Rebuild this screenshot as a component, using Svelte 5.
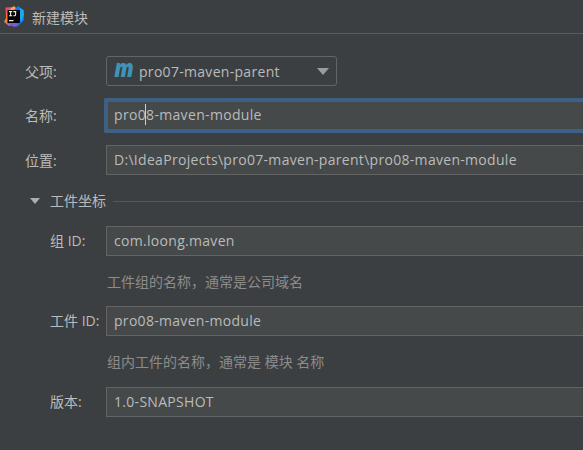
<script>
  let parent = 'pro07-maven-parent';
  let nameBefore = 'pro0';
  let nameAfter = '8-maven-module';
  let location = 'D:\\IdeaProjects\\pro07-maven-parent\\pro08-maven-module';
  let groupId = 'com.loong.maven';
  let artifactId = 'pro08-maven-module';
  let version = '1.0-SNAPSHOT';
</script>

<div class="dialog">
  <header class="titlebar">
    <svg class="logo" width="20" height="21" viewBox="0 0 20 21">
      <defs>
        <linearGradient id="warm" x1="0" y1="0" x2="0" y2="1">
          <stop offset="0" stop-color="#e8467d" />
          <stop offset=".4" stop-color="#f5653f" />
          <stop offset=".7" stop-color="#f98b28" />
          <stop offset="1" stop-color="#b35cc0" />
        </linearGradient>
      </defs>
      <path d="M1.5 1.5 L8 1 L14 8 L9 19 L5 20 L0 16 L2 12 Z" fill="url(#warm)" />
      <path d="M6 3 L10 0 L14 4 L10 8 Z" fill="#f9a35a" />
      <path d="M10 4 L14 0 L19.5 4 L20 14 L14 20 L6 18 Z" fill="#087cfa" />
      <path d="M16 2 L19.5 4 L20 9 L17 17 L15 6 Z" fill="#1aa8ef" />
      <path d="M3 17 L12 17 L14 20 L10 21 Z" fill="#7b5bd0" />
      <rect x="3.5" y="4" width="12.5" height="13" fill="#080405" />
      <path d="M5 5.6h3.2M6.6 5.6v4.2M5 9.8h3.2M9.3 5.6h3M11.6 5.6v3.2q0 1-1 1h-1.3M5 14.6h4.5" fill="none" stroke="#e8e8e8" stroke-width="1.1" />
    </svg>
    <span class="title">新建模块</span>
  </header>

  <main class="form">
    <div class="row parent">
      <span class="label">父项:</span>
      <div class="combo">
        <svg class="maven" width="20" height="16" viewBox="0 0 20 16">
          <text x="0.3" y="15" textLength="19.5" lengthAdjust="spacingAndGlyphs">m</text>
        </svg>
        <span class="latin">{parent}</span>
        <i class="arrow"></i>
      </div>
    </div>

    <div class="row name">
      <span class="label">名称:</span>
      <div class="field focused latin">{nameBefore}<i class="caret"></i>{nameAfter}</div>
    </div>

    <div class="row location">
      <span class="label">位置:</span>
      <div class="field latin path">{location}</div>
    </div>

    <div class="section">
      <i class="arrow small"></i>
      <span class="caption">工件坐标</span>
      <i class="rule"></i>
    </div>

    <div class="row nested">
      <span class="label">组 ID:</span>
      <div class="field latin">{groupId}</div>
    </div>
    <p class="hint">工件组的名称，通常是公司域名</p>

    <div class="row nested">
      <span class="label">工件 ID:</span>
      <div class="field latin">{artifactId}</div>
    </div>
    <p class="hint second">组内工件的名称，通常是 模块 名称</p>

    <div class="row nested">
      <span class="label">版本:</span>
      <div class="field latin version">{version}</div>
    </div>
  </main>
</div>

<style>
  :global(body) {
    margin: 0;
    overflow: hidden;
  }
  .dialog {
    width: 583px;
    height: 450px;
    overflow: hidden;
    background: #3c3f41;
    color: #bbbbbb;
    font: 14px/20px 'Open Sans', 'Noto Sans CJK SC', sans-serif;
  }
  .latin {
    letter-spacing: 0.3px;
    white-space: nowrap;
  }
  .titlebar {
    box-sizing: border-box;
    height: 34px;
    display: flex;
    align-items: flex-start;
    padding: 6px 0 0 4px;
    border-bottom: 1px solid #4a6078;
  }
  .logo {
    flex: none;
  }
  .title {
    margin: 2px 0 0 8px;
  }
  .form {
    padding-top: 22px;
  }
  .row {
    display: flex;
    align-items: center;
    height: 30px;
    padding-left: 25px;
  }
  .label {
    flex: none;
    width: 81px;
    padding-top: 2px;
  }
  .name .label,
  .nested .label {
    padding-top: 0;
  }
  .nested {
    padding-left: 50px;
  }
  .nested .label {
    width: 56px;
  }
  .combo {
    box-sizing: border-box;
    width: 231px;
    height: 30px;
    display: flex;
    align-items: center;
    padding: 0 7px 0 7px;
    border: 1px solid #646464;
    border-radius: 3px;
  }
  .combo .latin {
    padding-top: 1px;
  }
  .maven {
    margin: -3px 5px 0 0;
    overflow: visible;
  }
  .maven text {
    font: italic 800 24px 'Open Sans', sans-serif;
    fill: #3f94b5;
  }
  .arrow {
    margin-left: auto;
    border: 6px solid transparent;
    border-top: 7px solid #9a9da0;
    border-bottom: 0;
  }
  .name {
    height: 35px;
    margin-top: 12px;
  }
  .field {
    box-sizing: border-box;
    flex: 1;
    height: 30px;
    padding-left: 7px;
    border: 1px solid #646464;
    border-right: 0;
    background: #45494a;
    line-height: 27px;
  }
  .focused {
    height: 35px;
    margin-left: -2px;
    padding-left: 6px;
    border: 4px solid #3d6185;
    border-right: 0;
    border-radius: 2px 0 0 2px;
    letter-spacing: 0.33px;
    line-height: 25px;
  }
  .caret {
    display: inline-block;
    width: 1px;
    height: 21px;
    margin-left: -1px;
    background: #d0d0d0;
    vertical-align: -5px;
  }
  .location {
    margin-top: 12px;
  }
  .section {
    display: flex;
    align-items: center;
    height: 20px;
    margin: 16px 0 15px;
    padding-left: 30px;
  }
  .arrow.small {
    margin: 0 10px 0 0;
    border-width: 6px 5px 0;
    border-top-color: #adadad;
  }
  .rule {
    flex: 1;
    height: 1px;
    margin-left: 7px;
    background: #555759;
  }
  .hint {
    height: 20px;
    margin: 16px 0 14px 107px;
    color: #8c8c8c;
  }
  .second {
    margin-bottom: 15px;
  }
</style>
